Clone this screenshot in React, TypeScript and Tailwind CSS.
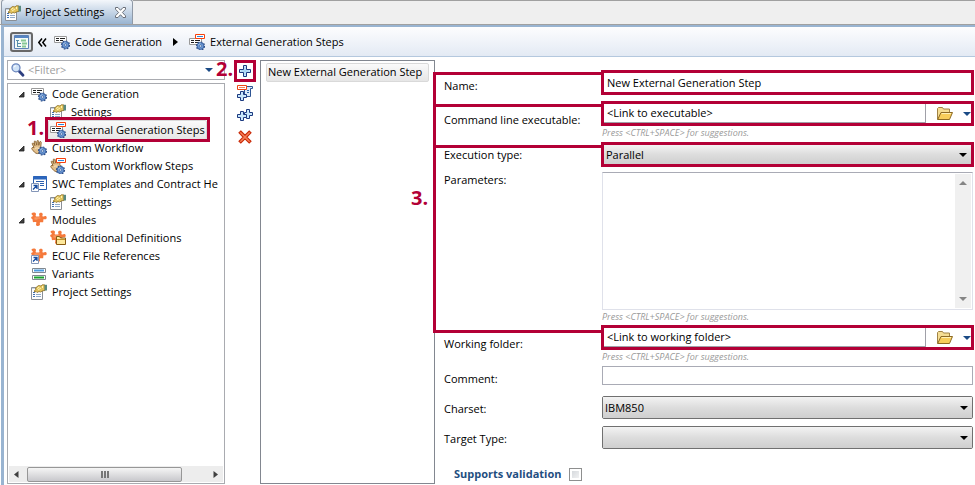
import React, { type ReactNode } from "react";

type IconProps = { children: ReactNode };

function Icon({ children }: IconProps) {
  return (
    <svg width="16" height="16" viewBox="0 0 16 16" className="block shrink-0" aria-hidden="true">
      {children}
    </svg>
  );
}

/* Small blue cog, drawn into the lower right corner of an icon */
function Cog() {
  return (
    <g>
      <circle cx="11.5" cy="11" r="4" fill="none" stroke="#27477f" strokeWidth="1.2" strokeDasharray="1.7 1.4" />
      <circle cx="11.5" cy="11" r="3.4" fill="#6a97d2" stroke="#3a62a4" strokeWidth="1" />
      <path d="M9.4 10.2a2.4 2.4 0 0 1 2-1.600" stroke="#a9c8ec" strokeWidth="1" fill="none" />
      <circle cx="11.5" cy="11" r="1.100" fill="#f3f7fc" stroke="#2f5596" strokeWidth="0.6" />
    </g>
  );
}

function Sheet() {
  return (
    <g>
      <path d="M.5 2.5h12v6H.5z" fill="#fff" stroke="#9a9a9a" />
      <path d="M2 4.5h3M2 6.5h3M6 4.5h5M6 6.5h3" stroke="#202020" />
    </g>
  );
}

function RedTag() {
  return (
    <g>
      <path d="M6.5.5h9v4h-9z" fill="#fff" stroke="#f8400c" />
      <path d="M8 2.5h6" stroke="#2f86dc" />
    </g>
  );
}

function Hand() {
  return (
    <g>
      <path
        d="M3 7.500 1.300 4.200C.9 3.200 2 2.600 2.600 3.500L3.900 5.600 3.200 2c-.1-1.200 1.300-1.400 1.600-.3L5.800 5.200 6 1.300C6 .2 7.500.2 7.600 1.300L7.800 5.300l.9-3.200c.3-1 1.600-.7 1.500.4L9.800 6.500l.8 1.500c.4 3-1.200 5.600-3.900 5.600C4 13.600 3 11.500 1 9.200.2 8.100 1.500 6.900 3 7.500z"
        fill="#e3c08c"
        stroke="#86602f"
        strokeWidth="0.9"
      />
      <path d="M4 8.500c1-.7 2.500-.7 4 0" stroke="#f8e6c4" fill="none" />
    </g>
  );
}

function PuzzleShape() {
  return (
    <g>
      <path
        d="M.5 1.500C1.500.200 4.500.200 5 1.800c.2 1-.9 1.700 0 2.600h3.200c.9-.6-.3-1.500-.1-2.500C8.500.3 11.400.3 11.700 1.900c.2 1-.8 1.700 0 2.600h1.100c.7-.9 2.700-.8 2.900.9.200 1.900-2 2.400-3 1.500-.6.700-.2 2.300-.6 3.300-1.100.5-2.500-.5-3.200.2-.5.900.6 1.800-.2 2.900-1.200 1.200-3.700.7-3.700-.9 0-.9.800-1.500.2-2.200-.8-.6-2.200.2-3.200-.1-.5-.9-.1-2.300-.7-3C.5 6.700.1 6.300.2 5.300.500 4.500 1.900 4.600 1.900 3.800 1.800 3 .200 2.700.5 1.500z"
        fill="#f5793b"
      />
      <path d="M3.500 6h6M3.500 7h3" stroke="#fba36f" />
    </g>
  );
}

function ShortcutBadge() {
  return (
    <g>
      <path d="M.5 7.500h7v8h-7z" fill="#fff" stroke="#8496b8" />
      <path d="M2 13.500 5.500 10M2.500 9.500h3.500v3.500" fill="none" stroke="#174ca0" strokeWidth="1.300" />
    </g>
  );
}

const CodeGenIcon = () => <Icon><Sheet /><Cog /></Icon>;
const ExternalStepsIcon = () => <Icon><g transform="translate(0 2)"><Sheet /></g><RedTag /><g transform="translate(0 1)"><Cog /></g></Icon>;
const WorkflowIcon = () => <Icon><Hand /><Cog /></Icon>;
const WorkflowStepsIcon = () => <Icon><Hand /><RedTag /><g transform="translate(-1 1)"><Cog /></g></Icon>;
const PuzzleIcon = () => <Icon><PuzzleShape /></Icon>;

const SettingsIcon = () => (
  <Icon>
    <path d="M.5 3.500h11v12H.5z" fill="#fdfdfd" stroke="#8a8f96" />
    <path d="M1 4.500h5" stroke="#c9d4e2" />
    <path d="M2 8.500h2M2 10.500h2M2 12.500h2" stroke="#3d6fb4" />
    <path d="M5 10.500h5M5 12.500h5" stroke="#8fa9c8" />
    <path d="M4.500 4 7.500 1.500 10 2l1.500-1.300L14 1v5.500l-2 .2L9.500 8 8 7.500 6 8.500 5.200 7.500 3.500 8V6.500L5 5.500z" fill="#e2c35c" stroke="#8b6d22" strokeWidth="0.800" />
    <path d="M6 4.500 8.500 3M7 6l3-2M11.500 2v2" fill="none" stroke="#fff3b5" />
    <path d="M13.500.8H16v5.700h-2.500z" fill="#5a8a80" />
  </Icon>
);

const TemplateIcon = () => (
  <Icon>
    <path d="M2.500 .5h13v13h-13z" fill="#fff" stroke="#2b5fae" />
    <path d="M2 2h14" stroke="#2b66be" strokeWidth="3" />
    <path d="M5 5.500h8M9 7.500h4M9 9.500h4" stroke="#2b5fae" />
    <ShortcutBadge />
  </Icon>
);

const DefinitionsIcon = () => (
  <Icon>
    <PuzzleShape />
    <path d="M6.500 14.500v-8h3l1 1.500h5v6.500z" fill="#fde89c" stroke="#8a5a12" />
    <path d="M7 9.500h8" stroke="#c59125" />
  </Icon>
);

const EcucIcon = () => <Icon><PuzzleShape /><ShortcutBadge /></Icon>;

const VariantsIcon = () => (
  <Icon>
    <path d="M1.500 2.500h13v4h-13zM1.500 9.500h13v4h-13z" fill="#fff" stroke="#808890" />
    <path d="M3 4.500h10" stroke="#4a9be0" strokeWidth="2" />
    <path d="M3 11.500h10" stroke="#19a52c" strokeWidth="2" />
  </Icon>
);

const PlusIcon = () => (
  <Icon>
    <path d="M6.500 2.500h3v4h4v3h-4v4h-3v-4h-4v-3h4z" fill="#c9e7fb" stroke="#1c3a80" />
    <path d="M8 4v8M4 8h8" stroke="#9fd1f3" />
  </Icon>
);

const PlusTemplateIcon = () => (
  <Icon>
    <path d="M7.500 1.500h8v2h-2v8h-6z" fill="#dcecfb" stroke="#2d5493" />
    <path d="M10 5.500h2M10 7.500h2" stroke="#2d66ac" />
    <path d="M.5 .5h9v4h-9z" fill="#fff" stroke="#ee4413" />
    <path d="M2 2.500h6" stroke="#f38a5c" />
    <path d="M3.500 6.500h3v3h3v3h-3v3h-3v-3h-3v-3h3z" fill="#c9e7fb" stroke="#1c3a80" />
  </Icon>
);

const DoublePlusIcon = () => (
  <Icon>
    <path d="M9.500 2.500h3v3h3v3h-3v3h-3v-3h-2v-3h2z" fill="#c9e7fb" stroke="#1c3a80" />
    <path d="M3.500 4.500h3v3h3v3h-3v3h-3v-3h-3v-3h3z" fill="#c9e7fb" stroke="#1c3a80" />
  </Icon>
);

const DeleteIcon = () => (
  <Icon>
    <path d="M3.800 2 8 6.200 12.200 2 14 3.800 9.900 8.100 14 12.300 12.200 14 8 9.900 3.800 14 2 12.300 6.100 8.100 2 3.800z" fill="#f58058" stroke="#c92a08" strokeWidth="1.100" />
  </Icon>
);

const FolderIcon = () => (
  <Icon>
    <path d="M.5 13.500v-11l1-1h4l1 1.500h6v3" fill="#f5dd93" stroke="#a08245" />
    <path d="M.7 13.500 4 6.500h11.500l-3 7z" fill="#f7cd5b" stroke="#8c6a25" />
    <path d="M4.700 7.500h9.300" stroke="#fff0b5" />
  </Icon>
);

const SearchIcon = () => (
  <Icon>
    <path d="m9 9 4 4.300" stroke="#2d3f80" strokeWidth="2.800" strokeLinecap="round" />
    <circle cx="6" cy="5.800" r="4" fill="#cfe2f7" stroke="#6b86bd" strokeWidth="1.300" />
    <path d="M4 5.500a2 2 0 0 1 2-1.700" stroke="#fff" fill="none" />
  </Icon>
);

function DownTriangle({ className }: { className: string }) {
  return (
    <svg width="8" height="4" viewBox="0 0 8 4" className={className} aria-hidden="true">
      <path d="M0 0h8L4 4z" fill="currentColor" />
    </svg>
  );
}

type TreeNode = { label: string; icon: () => ReactNode; level: 1 | 2; open?: boolean; selected?: boolean };

const tree: TreeNode[] = [
  { label: "Code Generation", icon: CodeGenIcon, level: 1, open: true },
  { label: "Settings", icon: SettingsIcon, level: 2 },
  { label: "External Generation Steps", icon: ExternalStepsIcon, level: 2, selected: true },
  { label: "Custom Workflow", icon: WorkflowIcon, level: 1, open: true },
  { label: "Custom Workflow Steps", icon: WorkflowStepsIcon, level: 2 },
  { label: "SWC Templates and Contract He", icon: TemplateIcon, level: 1, open: true },
  { label: "Settings", icon: SettingsIcon, level: 2 },
  { label: "Modules", icon: PuzzleIcon, level: 1, open: true },
  { label: "Additional Definitions", icon: DefinitionsIcon, level: 2 },
  { label: "ECUC File References", icon: EcucIcon, level: 1 },
  { label: "Variants", icon: VariantsIcon, level: 1 },
  { label: "Project Settings", icon: SettingsIcon, level: 1 },
];

function TreeRow({ node }: { node: TreeNode }) {
  const NodeIcon = node.icon;
  return (
    <li role="treeitem" aria-selected={!!node.selected} className={node.level === 1 ? "flex h-[18px] items-center pl-[9px]" : "relative flex h-[18px] items-center pl-[41px]"}>
      {node.level === 1 && (
        <span className="flex w-[13px] shrink-0">
          {node.open && (
            <svg width="7" height="7" viewBox="0 0 7 7" aria-hidden="true">
              <path d="M6 1v5H1z" fill="#404040" stroke="#202020" strokeWidth="0.800" />
            </svg>
          )}
        </span>
      )}
      {node.selected && (
        <>
          <span className="absolute -top-px left-[39px] h-5 w-[159px] rounded-xs border border-[#d9d9d9] bg-linear-to-b from-[#fafafa] to-[#e6e6e6]" />
          <span className="absolute -top-[4px] left-[36px] h-[25px] w-[165px] border-3 border-[#b30036]" />
          <span className="absolute -top-[5px] left-[18px] text-xl leading-6 font-bold text-[#b30036]">1.</span>
        </>
      )}
      <span className="relative flex items-center gap-[5px] whitespace-nowrap">
        <NodeIcon />
        {node.label}
      </span>
    </li>
  );
}

function Row({ id, label, className, labelClass, children }: { id: string; label: string; className: string; labelClass: string; children: ReactNode }) {
  return (
    <div className={`flex items-start ${className}`}>
      <label htmlFor={id} className={`w-[157px] shrink-0 leading-4 ${labelClass}`}>{label}</label>
      <div className="min-w-0 flex-1">{children}</div>
    </div>
  );
}

const Hint = () => <p className="pt-px pl-px text-[9px] leading-3 text-[#9a9a9a] italic">Press &lt;CTRL+SPACE&gt; for suggestions.</p>;

function LinkField({ id, value }: { id: string; value: string }) {
  return (
    <div className="flex h-[25px] border-3 border-[#b30036]">
      <input id={id} defaultValue={value} className="min-w-0 flex-1 border-r border-b border-[#a0a0a8] pl-[3px] outline-none" />
      <button aria-label="Browse" className="ml-[11px] flex w-4 items-center"><FolderIcon /></button>
      <button aria-label="More" className="ml-[10px] flex w-2 items-center text-[#1b4a85]"><DownTriangle className="block" /></button>
    </div>
  );
}

function Dropdown({ id, options, framed }: { id: string; options: string[]; framed?: boolean }) {
  return (
    <div className={framed ? "relative h-[25px] border-3 border-[#b30036]" : "relative mr-px ml-px h-[23px] rounded-xs border border-[#707070]"}>
      <select id={id} className="block size-full appearance-none bg-linear-to-b from-[#f3f3f3] from-0% via-[#dddddd] via-50% to-[#cfcfcf] pl-[2px] leading-4 outline-none">
        {options.map((option) => <option key={option}>{option}</option>)}
      </select>
      <DownTriangle className="pointer-events-none absolute top-1/2 right-1 -translate-y-1/2" />
    </div>
  );
}

export default function App() {
  return (
    <div className="flex min-h-screen flex-col bg-white font-['Open_Sans','Noto_Sans',sans-serif] text-[11px] text-black">
      <div className="flex h-[25px] items-end border-b border-[#a0a0a0] bg-[#efefef] pt-px pl-px">
        <div role="tab" aria-selected="true" className="flex h-[25px] w-[132px] items-center rounded-t border border-b-0 border-[#8f99a6] bg-linear-to-b from-[#f4f7fb] to-[#99b4d1] pt-px pl-[3px]">
          <SettingsIcon />
          <span className="ml-1 whitespace-nowrap">Project Settings</span>
          <button aria-label="Close tab" className="ml-[10px]">
            <svg width="11" height="11" viewBox="0 0 11 11" className="block">
              <path d="M.5.5h2.500l2.500 2.800L8 .5h2.500v1.700L7.400 5.500l3.100 3.300v1.700H8L5.500 7.700 3 10.500H.5V8.800l3.100-3.300L.5 2.200z" fill="#fff" stroke="#6a6f78" />
            </svg>
          </button>
        </div>
        <div className="h-6 flex-1 border-t border-[#a0a0a0]" />
      </div>
      <div className="ml-px flex flex-1 flex-col border-t-2 border-l-3 border-[#99b4d1]">
        <nav aria-label="Breadcrumb" className="flex h-[30px] items-center border-b border-[#b4c8de] bg-linear-to-b from-[#fdfdfe] to-[#e3eaf4] pt-px pl-[6px]">
          <button aria-label="Toggle tree" className="flex h-5 w-[23px] items-center justify-center rounded-[3px] border-2 border-[#686868] bg-[#dde3ec]">
            <svg width="15" height="14" viewBox="0 0 15 14" aria-hidden="true">
              <path d="M.5.5h14v13H.5z" fill="#f5fbf7" stroke="#5d82b5" />
              <path d="M1 2h13" stroke="#5685c4" strokeWidth="2" />
              <path d="M2 5.500h3M4 8.500h3M4 11.500h3M3.500 5v7" stroke="#568eaa" />
              <path d="M7 5.500h5M8 8.500h5M8 11.500h4" stroke="#86c794" strokeWidth="2" />
            </svg>
          </button>
          <svg width="9" height="9" viewBox="0 0 9 9" className="ml-[5px]" aria-hidden="true">
            <path d="M4 .5.8 4.500 4 8.500M8 .5 4.800 4.500 8 8.500" fill="none" stroke="#000" strokeWidth="1.500" />
          </svg>
          <a href="#code-generation" className="ml-[7px] flex items-center gap-[5px] whitespace-nowrap"><CodeGenIcon />Code Generation</a>
          <svg width="5" height="8" viewBox="0 0 5 8" className="mx-[11px]" aria-hidden="true"><path d="M0 0v8l5-4z" /></svg>
          <a href="#external-steps" className="flex items-center gap-[5px] whitespace-nowrap"><ExternalStepsIcon />External Generation Steps</a>
        </nav>

        <main className="flex flex-1">
          <aside className="ml-[3px] flex w-[218px] shrink-0 flex-col gap-[3px] pt-[3px] pb-px">
            <div className="flex h-5 items-center border border-[#a9abb0] pl-[2px]">
              <SearchIcon />
              <input aria-label="Filter" placeholder="<Filter>" className="ml-[2px] min-w-0 flex-1 outline-none placeholder:text-[#a0a0a0]" />
              <DownTriangle className="mr-[11px] text-[#1b4a85]" />
            </div>
            <div className="flex flex-1 flex-col border border-[#a9abb0] p-px">
              <ul role="tree" className="flex-1">
                {tree.map((node, i) => <TreeRow key={i} node={node} />)}
              </ul>
              <div className="flex h-4 items-center bg-[#ededed] pr-[5px] pl-[5px]">
                <svg width="5" height="7" viewBox="0 0 5 7" aria-hidden="true"><path d="M4.500 0v7L0 3.500z" fill="#404040" /></svg>
                <div className="ml-2 flex h-[15px] w-[155px] items-center justify-center gap-px rounded-xs border border-[#979797] bg-linear-to-b from-[#f5f5f5] to-[#c8c8cc]">
                  <span className="h-[7px] w-[2px] bg-[#777]" />
                  <span className="h-[7px] w-[2px] bg-[#777]" />
                  <span className="h-[7px] w-[2px] bg-[#777]" />
                </div>
                <svg width="5" height="7" viewBox="0 0 5 7" className="ml-auto" aria-hidden="true"><path d="M.5 0v7L5 3.500z" fill="#404040" /></svg>
              </div>
            </div>
          </aside>

          <div role="toolbar" aria-label="Step actions" className="relative flex w-[35px] shrink-0 flex-col items-center gap-[6px] pt-[3px] pl-[5px]">
            <span className="absolute top-0 -left-[9px] text-xl leading-6 font-bold text-[#b30036]">2.</span>
            <button aria-label="Add" className="relative flex size-[22px] items-center justify-center border-3 border-[#b30036]"><PlusIcon /></button>
            <button aria-label="Add from template" className="-mt-[3px]"><PlusTemplateIcon /></button>
            <button aria-label="Duplicate"><DoublePlusIcon /></button>
            <button aria-label="Delete"><DeleteIcon /></button>
          </div>

          <div className="flex w-[175px] shrink-0 flex-col pt-[3px] pb-px">
            <ul role="listbox" aria-label="Steps" className="flex-1 border border-[#828790] p-[2px] pl-[5px]">
              <li role="option" aria-selected="true" className="flex h-[19px] w-[163px] items-center rounded-xs border border-[#d9d9d9] bg-linear-to-b from-[#fafafa] to-[#e6e6e6] pl-px whitespace-nowrap">New External Generation Step</li>
            </ul>
          </div>

          <form className="relative min-w-0 flex-1 pt-[13px] pr-px pl-[9px]">
            <div className="pointer-events-none absolute top-[15px] -left-[2px] h-[261px] w-[170px] border-3 border-r-0 border-[#b30036]">
              <div className="h-[32px] border-b-3 border-[#b30036]" />
              <div className="h-[41px] border-b-3 border-[#b30036]" />
              <span className="absolute top-[111px] -left-[25px] text-xl leading-6 font-bold text-[#b30036]">3.</span>
            </div>
            <Row id="name" label="Name:" className="h-[31px]" labelClass="pt-2">
              <input id="name" defaultValue="New External Generation Step" className="block h-[25px] w-full border-3 border-[#b30036] pl-[3px] outline-none" />
            </Row>
            <Row id="executable" label="Command line executable:" className="h-[41px]" labelClass="pt-[11px]">
              <LinkField id="executable" value="<Link to executable>" />
              <Hint />
            </Row>
            <Row id="execution" label="Execution type:" className="h-[30px]" labelClass="pt-[5px]">
              <Dropdown id="execution" options={["Parallel", "Sequential"]} framed />
            </Row>
            <Row id="parameters" label="Parameters:" className="h-[153px]" labelClass="">
              <div className="mr-px ml-px flex h-[138px] border border-[#dfe1ea] border-t-[#a9abb5]">
                <textarea id="parameters" className="min-w-0 flex-1 resize-none outline-none" />
                <div className="my-px mr-px flex w-4 flex-col items-center justify-between bg-[#f0f0f0] py-[7px] text-[#858585]">
                  <DownTriangle className="rotate-180" />
                  <DownTriangle className="" />
                </div>
              </div>
              <Hint />
            </Row>
            <Row id="folder" label="Working folder:" className="h-[41px]" labelClass="pt-[11px]">
              <LinkField id="folder" value="<Link to working folder>" />
              <Hint />
            </Row>
            <Row id="comment" label="Comment:" className="h-[30px] pr-px" labelClass="pt-[5px]">
              <div className="pl-px"><input id="comment" className="block h-[19px] w-full border border-[#a9abb5] px-1 outline-none" /></div>
            </Row>
            <Row id="charset" label="Charset:" className="h-[30px]" labelClass="pt-[5px]">
              <Dropdown id="charset" options={["IBM850", "UTF-8"]} />
            </Row>
            <Row id="target" label="Target Type:" className="h-10" labelClass="pt-[5px]">
              <Dropdown id="target" options={[""]} />
            </Row>
            <label className="ml-[10px] flex items-center gap-[7px] leading-4 font-bold text-[#1f4e80]">
              Supports validation
              <input type="checkbox" className="size-[13px] appearance-none border border-[#8e8f8f] bg-linear-to-br from-[#cfd3d8] to-[#f8f8f8] ring-2 ring-white ring-inset" />
            </label>
          </form>
        </main>
      </div>
    </div>
  );
}
